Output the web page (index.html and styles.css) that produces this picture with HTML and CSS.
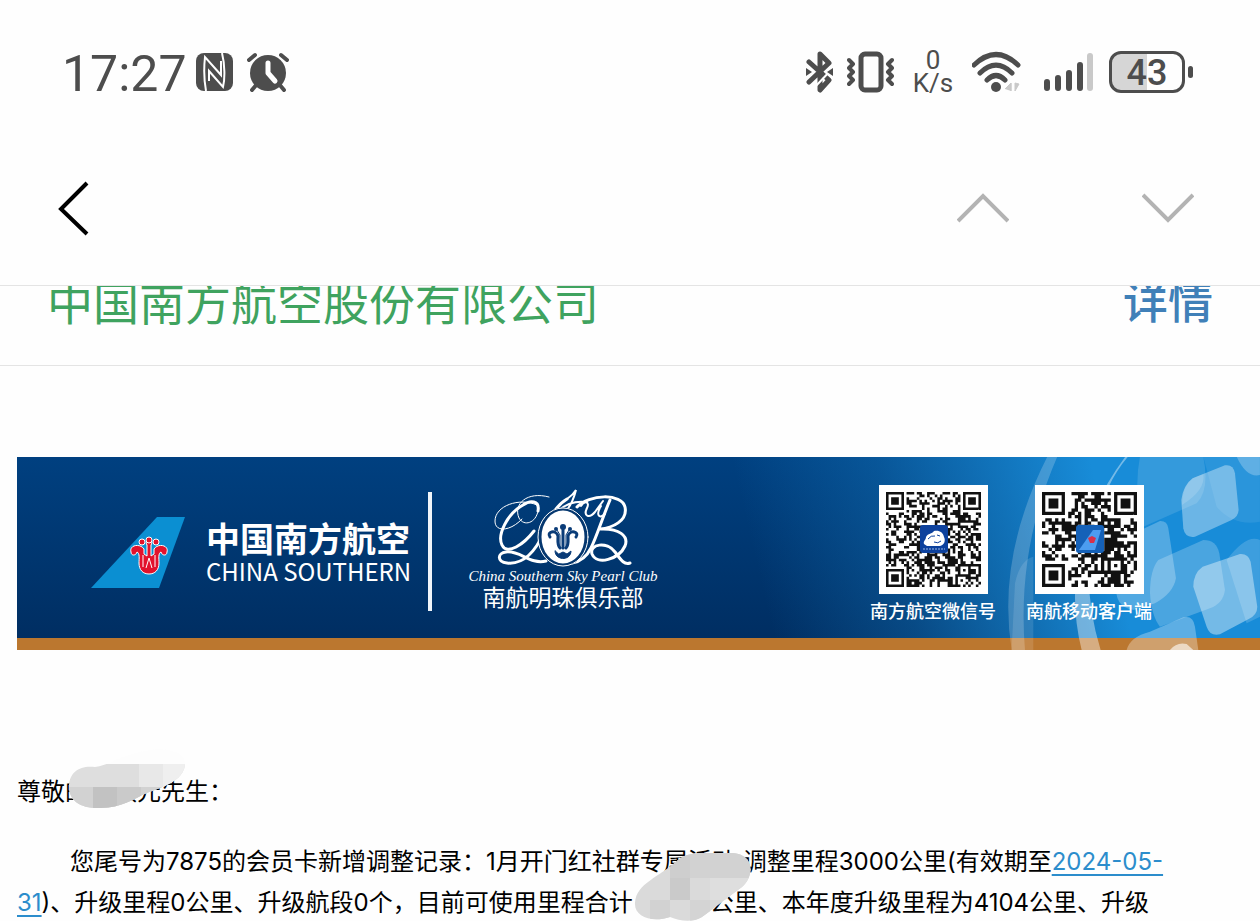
FILE: index.html
```html
<!DOCTYPE html>
<html lang="zh-CN">
<head>
    <meta charset="UTF-8">
    <meta name="viewport" content="width=device-width, initial-scale=1.0">
    <title>中国南方航空股份有限公司</title>
    <link rel="stylesheet" href="styles.css">
</head>
<body>
    <div class="status-bar">
        <div class="status-left">
            <span class="time">17:27</span>
            <svg class="nfc" width="37" height="38" viewBox="0 0 37 38">
                <rect x="0" y="0" width="37" height="38" rx="8" fill="#4d4d4d"/>
                <path d="M10 38C8 27 8 13 9 4L25 22V8M26 0C29 12 29 26 27 34L13 18V28" fill="none" stroke="#fff" stroke-width="2"/>
            </svg>
            <svg width="42" height="42" viewBox="0 0 42 42">
                <circle cx="21" cy="22" r="18" fill="#4d4d4d"/>
                <path d="M2 9l6-5M34 4l6 5M10 33l-5 6M32 33l5 6" stroke="#4d4d4d" stroke-width="4" stroke-linecap="round"/>
                <path d="M21 12v10l7 8" fill="none" stroke="#fff" stroke-width="5" stroke-linecap="round" stroke-linejoin="round"/>
            </svg>
        </div>
        <div class="status-right">
            <svg width="27" height="42" viewBox="0 0 27 42">
                <path d="M3 11l20 18-9 10V3l9 9L3 31" fill="none" stroke="#4d4d4d" stroke-width="5" stroke-linejoin="round" stroke-linecap="round"/>
                <path d="M8 37L26 18" stroke="#fff" stroke-width="2"/>
                <path d="M0 17l6 4-6 4zM27 17l-6 4 6 4z" fill="#4d4d4d"/>
            </svg>
            <svg width="47" height="42" viewBox="0 0 47 42">
                <rect x="14" y="3" width="20" height="36" rx="4" fill="none" stroke="#4d4d4d" stroke-width="5"/>
                <path d="M2 9l4 4-4 4 4 4-4 4 4 4-4 4M45 9l-4 4 4 4-4 4 4 4-4 4 4 4" fill="none" stroke="#4d4d4d" stroke-width="4" stroke-linecap="round" stroke-linejoin="round"/>
            </svg>
            <div class="net-speed"><span>0</span><span>K/s</span></div>
            <svg width="58" height="42" viewBox="0 0 58 42">
                <path d="M2 14Q24-7 46 14M8 22Q24 6 40 22M15 29Q24 20 33 29" fill="none" stroke="#4d4d4d" stroke-width="5" stroke-linecap="round"/>
                <circle cx="24" cy="36" r="5" fill="#4d4d4d"/>
                <path d="M33 38l6-6v8M39 32v8M43 32v8l4-7z" fill="#c9c9c9" stroke="#c9c9c9" stroke-width="1"/>
            </svg>
            <svg width="51" height="42" viewBox="0 0 51 42">
                <path d="M3 31v6M14 27v10M25 22v15M36 14v23" stroke="#4d4d4d" stroke-width="6" stroke-linecap="round"/>
                <path d="M46 5v32" stroke="#c9c9c9" stroke-width="6" stroke-linecap="round"/>
            </svg>
            <div class="battery"><span class="level">43</span></div>
        </div>
    </div>

    <nav class="nav-bar">
        <button class="nav-btn" aria-label="返回">
            <svg width="32" height="56" viewBox="0 0 32 56"><path d="M30 3L4 29l26 25" fill="none" stroke="#000" stroke-width="4"/></svg>
        </button>
        <div class="nav-pager">
            <button class="nav-btn" aria-label="上一封">
                <svg width="52" height="30" viewBox="0 0 52 30"><path d="M1 28L26 3l25 25" fill="none" stroke="#b3b3b3" stroke-width="4"/></svg>
            </button>
            <button class="nav-btn" aria-label="下一封">
                <svg width="52" height="30" viewBox="0 0 52 30"><path d="M1 2l25 25L51 2" fill="none" stroke="#b3b3b3" stroke-width="4"/></svg>
            </button>
        </div>
    </nav>

    <div class="sender">
        <span class="sender-name">中国南方航空股份有限公司</span>
        <a class="detail" href="#">详情</a>
    </div>

    <main class="mail">
        <div class="banner">
            <svg class="banner-bg" viewBox="0 0 1243 193" preserveAspectRatio="xMaxYMin slice">
                <defs>
                    <linearGradient id="navy" x1="0" y1="0" x2="0" y2="1">
                        <stop offset="0" stop-color="#004080"/>
                        <stop offset="1" stop-color="#002e62"/>
                    </linearGradient>
                    <linearGradient id="sky" gradientUnits="userSpaceOnUse" x1="740" y1="110" x2="1080" y2="30">
                        <stop offset="0" stop-color="#1a8ad4" stop-opacity="0"/>
                        <stop offset="0.4" stop-color="#1a8ad4" stop-opacity="0.3"/>
                        <stop offset="1" stop-color="#188cd8"/>
                    </linearGradient>
                </defs>
                <rect width="1243" height="181" fill="url(#navy)"/>
                <rect width="1243" height="181" fill="url(#sky)"/>
                <rect y="181" width="1243" height="12" fill="#bb772f"/>
                <!-- light panes on the right -->
                <g transform="translate(833 -7) scale(.3333)" fill="#fff">
                    <path d="M592 20Q440 320 485 600H525Q500 300 622 20z" opacity=".2"/>
                    <path d="M495 400Q510 330 550 320V600H485z" opacity=".12"/>
                    <path d="M826 20Q620 300 695 600H752Q670 330 776 110Q800 60 834 20z" opacity=".4"/>
                    <path d="M870 20H1060Q1080 120 1040 160L880 230Q850 120 870 20z" opacity=".12"/>
                    <path d="M1060 20H1230V215Q1150 230 1100 170z" opacity=".08"/>
                    <path d="M1028 85L1125 46Q1150 42 1155 70L1166 180Q1165 200 1145 210L1035 260Q1005 265 1000 235L994 150Q1000 105 1028 85z" opacity=".36"/>
                    <path d="M1028 85L1060 72Q1068 120 996 165Q996 110 1028 85z" opacity=".15"/>
                    <path d="M1160 20H1230V75Q1190 85 1160 20z" opacity=".25"/>
                    <path d="M830 260L930 213Q952 212 955 235L978 385Q970 430 915 460L850 480Q790 470 800 400z" opacity=".25"/>
                    <path d="M925 330L1060 270Q1100 270 1108 310L1125 420Q1120 460 1080 475L930 530Q905 500 900 430Q900 360 925 330z" opacity=".22"/>
                    <path d="M1058 350L1170 312Q1195 310 1202 335L1222 470Q1222 495 1195 508L1110 553Q1080 560 1070 530L1030 410Q1030 370 1058 350z" opacity=".4"/>
                    <path d="M1130 330Q1190 250 1230 270V500L1190 520z" opacity=".16"/>
                    <path d="M830 600Q840 560 900 545L1000 502Q1030 495 1035 530L1045 600z" opacity=".3"/>
                    <path d="M960 600Q980 575 1010 582L1030 600z" opacity=".6"/>
                </g>
            </svg>

            <div class="brand">
                <svg width="94" height="71" viewBox="0 0 94 71">
                    <path d="M66 0H94L68 71H0z" fill="#0b8fd2"/>
                    <g stroke="#fff" stroke-width="1" fill="#e2122c">
                        <path d="M40 35c-2-7 9-9 13-3v5l3 2v-11c-2-3 0-5 2-5s4 2 2 5v11l3-2v-5c4-6 15-4 13 3 0 4-5 4-6 0-3 1-2 7-2 11 0 7-4 11-10 11s-10-4-10-11c0-4 1-10-2-11-1 4-6 4-6 0z"/>
                        <circle cx="51" cy="25" r="3"/><circle cx="65" cy="25" r="3"/><circle cx="58" cy="23" r="3"/>
                    </g>
                    <path d="M52 50V38M55 51l3-10 3 10M64 50V38" fill="none" stroke="#fff" stroke-width="1"/>
                </svg>
                <div class="brand-text">
                    <span class="brand-cn">中国南方航空</span>
                    <span class="brand-en">CHINA SOUTHERN</span>
                </div>
            </div>

            <div class="club">
                <svg width="140" height="80" viewBox="0 0 140 80" fill="none" stroke="#fff" stroke-linecap="round">
                    <path d="M45 23C47 12 37 12 30 17C14 26 4 47 9 57C14 68 31 56 41 43" stroke-width="3"/>
                    <path d="M45 23C43 35 31 39 26 30C20 16 34 3 56 9M44 17C26 9 2 18 2 33C2 45 18 43 29 31" stroke-width="1"/>
                    <path d="M74 11C62 18 55 32 50 46C43 62 31 77 14 75C4 74 4 65 13 64C27 62 37 77 53 73" stroke-width="3"/>
                    <path d="M74 11Q80 7 83 2Q80 14 74 22M64 24C74 14 86 13 94 14" stroke-width="2"/>
                    <path d="M88 18C92 12 97 14 94 20C90 28 96 31 102 24L110 13M108 18C102 28 107 31 112 26" stroke-width="2"/>
                    <path d="M117 12C110 28 104 48 98 60C93 70 85 74 79 75" stroke-width="3"/>
                    <path d="M84 19C96 6 129 5 132 19C135 33 119 40 107 41C126 40 136 48 132 58C126 71 104 78 99 66C96 56 114 53 122 64C128 72 131 77 137 75" stroke-width="3"/>
                    <ellipse cx="70" cy="49" rx="23" ry="28" fill="#fff" stroke="#05376f" stroke-width="3"/>
                    <ellipse cx="70" cy="49" rx="25" ry="29" stroke-width="1"/>
                    <g stroke="#0a3c78" stroke-width="3">
                        <path d="M57 49c-4-5 6-8 8-1 0 5-1 9 2 12M83 49c4-5-6-8-8-1 0 5 1 9-2 12M70 60V42"/>
                        <path d="M67 60V47l-3-5M73 60V47l3-5" stroke-width="1"/>
                        <path d="M62 63c0 10 16 10 16 0l-4 3-4-2-4 2z" fill="#0a3c78" stroke-width="1"/>
                    </g>
                    <g fill="#0a3c78" stroke="none"><circle cx="63" cy="41" r="2"/><circle cx="70" cy="39" r="3"/><circle cx="77" cy="41" r="2"/></g>
                </svg>
                <span class="club-en">China Southern Sky Pearl Club</span>
                <span class="club-cn">南航明珠俱乐部</span>
            </div>

            <div class="codes">
                <figure class="code">
                    <div class="qr">
                        <svg class="qr-img" data-size="37" data-seed="11" viewBox="0 0 37 37"></svg>
                        <svg class="qr-logo" width="28" height="28" viewBox="0 0 28 28">
                            <rect width="28" height="28" rx="3" fill="#0d419d"/>
                            <path d="M4 19c-1-3 2-4 2-7 2-4 6-3 8-6 5-1 9 1 10 6 2 4 0 8-4 9H7z" fill="#fff"/>
                            <path d="M8 14q3-4 7-3M17 10l3 1M14 17q4 2 7-1" fill="none" stroke="#0d419d"/>
                            <path d="M3 24h22" stroke="#9db9e6" stroke-dasharray="2 1"/>
                        </svg>
                    </div>
                    <figcaption>南方航空微信号</figcaption>
                </figure>
                <figure class="code">
                    <div class="qr">
                        <svg class="qr-img" data-size="29" data-seed="29" viewBox="0 0 29 29"></svg>
                        <svg class="qr-logo" width="28" height="28" viewBox="0 0 28 28">
                            <rect width="28" height="28" rx="3" fill="#1561b8"/>
                            <path d="M17 5h8l-6 20H3z" fill="#4c9df0"/>
                            <path d="M12 13l4-2 4 2-2 5h-4z" fill="#d8304a"/>
                        </svg>
                    </div>
                    <figcaption>南航移动客户端</figcaption>
                </figure>
            </div>
        </div>

        <div class="letter">
            <p class="greeting">尊敬的<span class="redacted name">　欢<svg class="blur-name" width="120" height="60" viewBox="0 0 120 60">
                <clipPath id="c1"><path d="M2 38C2 22 14 16 28 18C44 16 52 6 78 2C100-3 120 4 118 16C116 32 96 38 80 44C66 50 54 59 34 59C14 60 2 52 2 38z"/></clipPath>
                <g clip-path="url(#c1)">
                    <rect width="120" height="15" fill="#fdfdfd"/>
                    <rect y="15" width="120" height="45" fill="#dedede"/>
                    <rect x="72" y="15" width="24" height="23" fill="#e8e8e8"/>
                    <rect x="96" y="15" width="24" height="23" fill="#efefef"/>
                    <rect y="38" width="120" height="22" fill="#d2d2d2"/>
                    <rect x="26" y="38" width="24" height="22" fill="#c2c2c2"/>
                    <rect x="50" y="38" width="24" height="22" fill="#cacaca"/>
                </g>
            </svg></span>元先生：</p>
            <p class="content">您尾号为7875的会员卡新增调整记录：1月开门红社群专属活动,调整里程3000公里(有效期至<a href="#">2024-05-<wbr>31</a>)、升级里程0公里、升级航段0个，目前可使用里程合计<span class="redacted miles"><svg class="blur-miles" width="120" height="70" viewBox="0 0 120 70">
                <clipPath id="c2"><path d="M3 52C4 32 28 26 46 9C58-1 76 3 98 2C124 2 122 26 110 36C96 46 84 56 70 66C60 72 48 70 38 66C20 72 2 66 3 52z"/></clipPath>
                <g clip-path="url(#c2)">
                    <rect width="120" height="70" fill="#dadada"/>
                    <rect x="38" width="20" height="27" fill="#cecece"/>
                    <rect x="58" width="62" height="27" fill="#d2d2d2"/>
                    <rect x="38" y="27" width="20" height="22" fill="#cacaca"/>
                    <rect x="18" y="49" width="20" height="21" fill="#d2d2d2"/>
                    <rect x="58" y="49" width="20" height="21" fill="#d4d4d4"/>
                    <rect x="78" y="27" width="42" height="22" fill="#dedede"/>
                </g>
            </svg></span>公里、本年度升级里程为4104公里、升级</p>
        </div>
    </main>

    <script src="script.js"></script>
</body>
</html>
```

FILE: styles.css
```css
* {
    box-sizing: border-box;
}
body {
    margin: 0;
    height: 100vh;
    overflow: hidden;
    background-color: #fefefe;
    color: #000;
    font-family: "Noto Sans CJK SC", sans-serif;
}
svg {
    display: block;
    flex: none;
}

/* phone status bar */
.status-bar {
    display: flex;
    justify-content: space-between;
    padding: 51px 67px 38px 62px;
    color: #4d4d4d;
    font-family: Roboto, sans-serif;
}
.status-left,
.status-right {
    display: flex;
    align-items: center;
    gap: 14px;
    height: 42px;
}
.time {
    width: 124px;
    padding-top: 4px;
    font-size: 50px;
    line-height: 42px;
}
.nfc {
    margin-left: -4px;
}
.net-speed {
    display: flex;
    flex-direction: column;
    align-items: center;
    width: 50px;
    font-size: 26px;
    line-height: 23px;
}
.battery {
    position: relative;
    width: 76px;
    height: 42px;
    margin-right: 8px;
    border: 3px solid #4d4d4d;
    border-radius: 12px;
    background: linear-gradient(to right, #d6d6d6 50%, #fefefe 50%);
    text-align: center;
}
.battery::after {
    content: "";
    position: absolute;
    right: -11px;
    top: 12px;
    width: 5px;
    height: 12px;
    border-radius: 3px;
    background-color: #4d4d4d;
}
.level {
    display: block;
    font-size: 36px;
    font-weight: 500;
    line-height: 38px;
}

/* back / previous / next */
.nav-bar {
    display: flex;
    justify-content: space-between;
    align-items: center;
    height: 155px;
    padding: 0 66px 0 57px;
    border-bottom: 1px solid #e4e4e4;
}
.nav-pager {
    display: flex;
    gap: 133px;
}
.nav-btn {
    padding: 0;
    border: 0;
    background: none;
}

/* scrolled half under the nav bar */
.sender {
    display: flex;
    justify-content: space-between;
    height: 80px;
    padding: 0 47px;
    overflow: hidden;
    border-bottom: 1px solid #e4e4e4;
    font-size: 46px;
    line-height: 28px;
}
.sender-name {
    color: #3fa35f;
}
.detail {
    color: #4080b8;
    font-size: 45px;
    font-weight: 500;
    text-decoration: none;
}

.mail {
    padding: 91px 0 0 17px;
}
.banner {
    position: relative;
    display: flex;
    height: 193px;
    overflow: hidden;
    color: #fff;
    background-color: #003a77;
}
.banner-bg {
    position: absolute;
    left: 0;
    top: 0;
    width: 100%;
    height: 100%;
}
.brand,
.club,
.codes {
    position: relative;
    flex: none;
}
.brand {
    display: flex;
    align-items: flex-start;
    gap: 21px;
    height: 119px;
    margin: 35px 0 0 74px;
    padding: 25px 20px 0 0;
    border-right: 4px solid #f0f5fa;
}
.brand-text {
    display: flex;
    flex-direction: column;
    width: 202px;
    white-space: nowrap;
}
.brand-cn {
    font-size: 34px;
    font-weight: 700;
    line-height: 42px;
}
.brand-en {
    font-size: 24px;
    line-height: 24px;
}
.club {
    display: flex;
    flex-direction: column;
    align-items: center;
    width: 190px;
    margin: 31px 0 0 36px;
    white-space: nowrap;
}
.club-en {
    font-family: "Liberation Serif", serif;
    font-size: 15px;
    font-style: italic;
    line-height: 16px;
}
.club-cn {
    font-size: 23px;
    line-height: 24px;
}
.codes {
    display: flex;
    gap: 28px;
    margin: 28px 0 0 211px;
}
.code {
    display: flex;
    flex-direction: column;
    align-items: center;
    width: 128px;
    margin: 0;
}
.qr {
    position: relative;
    width: 109px;
    height: 109px;
    padding: 7px;
    background-color: #fff;
}
.qr-img {
    width: 95px;
    height: 95px;
}
.qr-logo {
    position: absolute;
    left: 41px;
    top: 40px;
}
.code figcaption {
    padding-top: 4px;
    font-size: 18px;
    font-weight: 500;
    line-height: 24px;
    white-space: nowrap;
}

/* mail text */
.letter {
    padding: 121px 84px 0 0;
    font-family: Inter, "Noto Sans CJK SC", sans-serif;
    font-size: 24px;
    line-height: 41px;
}
.letter p {
    margin: 0;
}
.letter .content {
    margin-top: 29px;
    text-indent: 53px;
}
.letter a {
    color: #2c8dcc;
    text-decoration: underline;
    text-underline-offset: 4px;
}
.redacted {
    position: relative;
    display: inline-block;
    text-indent: 0;
}
.miles {
    width: 77px;
}
.blur-name {
    position: absolute;
    left: -22px;
    top: -22px;
}
.blur-miles {
    position: absolute;
    left: -1px;
    bottom: -10px;
}
```

FILE: script.js
```js
// Fills each .qr-img with finder squares and a repeatable module pattern
function drawCode(svg) {
    const size = parseInt(svg.dataset.size);
    let seed = parseInt(svg.dataset.seed);
    let d = '';

    function random() {
        seed = (seed * 16807) % 2147483647;
        return seed / 2147483647;
    }

    // ring pattern: distance from the centre decides the colour
    function ring(x, y, cx, cy) {
        return Math.max(Math.abs(x - cx), Math.abs(y - cy));
    }

    for (let y = 0; y < size; y++) {
        for (let x = 0; x < size; x++) {
            let dark = random() < 0.52;
            const corners = [[3, 3], [size - 4, 3], [3, size - 4]];
            for (const [cx, cy] of corners) {
                const r = ring(x, y, cx, cy);
                if (r <= 4) dark = r !== 2 && r !== 4;
            }
            const a = ring(x, y, size - 7, size - 7);
            if (a <= 2) dark = a !== 1;
            if (dark) d += `M${x} ${y}h1v1h-1z`;
        }
    }
    svg.innerHTML = `<path d="${d}" fill="#111"/>`;
}

document.querySelectorAll('.qr-img').forEach(drawCode);
```
